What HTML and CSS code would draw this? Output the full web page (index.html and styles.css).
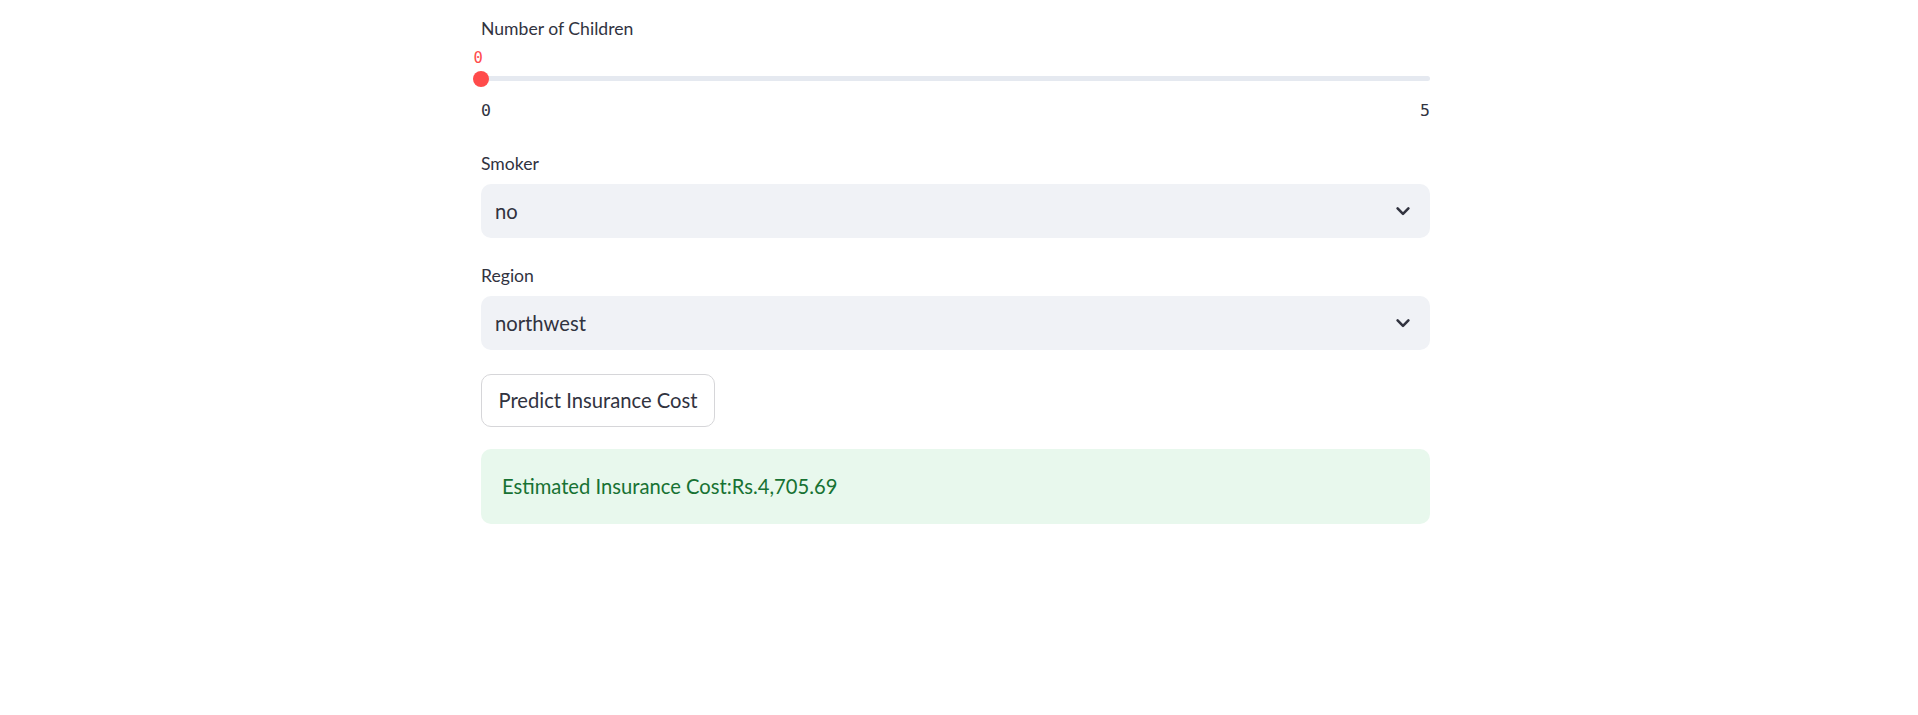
FILE: index.html
```html
<!DOCTYPE html>
<html lang="en">
<head>
<meta charset="utf-8">
<title>Insurance Cost Predictor</title>
<link rel="stylesheet" href="styles.css">
</head>
<body>
<main class="page">
  <div class="block">
    <div class="widget slider-widget">
      <div class="field-label">Number of Children</div>
      <div class="slider">
        <div class="track-row">
          <div class="track">
            <div class="thumb"><span class="thumb-value">0</span></div>
          </div>
        </div>
        <div class="ticks"><span>0</span><span>5</span></div>
      </div>
    </div>

    <div class="widget select-widget">
      <div class="field-label">Smoker</div>
      <div class="select">
        <span class="select-value">no</span>
        <svg class="chevron" width="24" height="24" viewBox="0 0 24 24" aria-hidden="true">
          <path d="M6.6 9.4 L12 14.8 L17.4 9.4" fill="none" stroke="currentColor" stroke-width="2.6" stroke-linecap="round" stroke-linejoin="round"/>
        </svg>
      </div>
    </div>

    <div class="widget select-widget">
      <div class="field-label">Region</div>
      <div class="select">
        <span class="select-value">northwest</span>
        <svg class="chevron" width="24" height="24" viewBox="0 0 24 24" aria-hidden="true">
          <path d="M6.6 9.4 L12 14.8 L17.4 9.4" fill="none" stroke="currentColor" stroke-width="2.6" stroke-linecap="round" stroke-linejoin="round"/>
        </svg>
      </div>
    </div>

    <div class="widget">
      <button class="btn" type="button">Predict Insurance Cost</button>
    </div>

    <div class="alert">Estimated Insurance Cost:Rs.4,705.69</div>
  </div>
</main>
</body>
</html>
```
FILE: styles.css
```css
html, body {
  margin: 0;
  padding: 0;
  background: #ffffff;
}

body {
  font-family: "Lato", "Noto Sans", sans-serif;
  color: #31333f;
}

.page {
  display: flex;
  justify-content: center;
  padding: 14.5px 7px 0 0;
}

.block {
  width: 949px;
  display: flex;
  flex-direction: column;
  gap: 22px;
}

.field-label {
  font-size: 17.6px;
  line-height: 28px;
  color: #31333f;
}

/* Slider */
.slider-widget {
  padding-bottom: 7.5px;
}

.slider {
  padding-top: 25px;
}

.track-row {
  height: 22px;
  display: flex;
  align-items: center;
}

.track {
  position: relative;
  width: 100%;
  height: 5px;
  border-radius: 3px;
  background: #e5e9f0;
}

.thumb {
  position: absolute;
  left: -8px;
  top: 50%;
  width: 16px;
  height: 16px;
  margin-top: -8px;
  border-radius: 50%;
  background: #ff4b4b;
}

.thumb-value {
  position: absolute;
  bottom: calc(100% + 5px);
  left: 0.5px;
  font-family: "DejaVu Sans Mono", monospace;
  font-size: 15.5px;
  line-height: 16px;
  color: #ff4b4b;
}

.ticks {
  margin-top: 11px;
  display: flex;
  justify-content: space-between;
  font-family: "DejaVu Sans Mono", monospace;
  font-size: 16.5px;
  line-height: 20px;
  color: #31333f;
}

/* Select */
.select-widget {
  padding-bottom: 2px;
}

.select {
  margin-top: 6px;
  height: 54px;
  box-sizing: border-box;
  display: flex;
  align-items: center;
  justify-content: space-between;
  padding: 0 15px 0 14px;
  background: #f0f2f6;
  border-radius: 10px;
}

.select-value {
  font-size: 20.2px;
  line-height: 54px;
  color: #31333f;
}

.chevron {
  display: block;
  color: #31333f;
}

/* Button */
.btn {
  display: block;
  height: 53px;
  box-sizing: border-box;
  padding: 0 16.5px;
  border: 1px solid #d6d6d9;
  border-radius: 10px;
  background: #ffffff;
  font-family: "Lato", "Noto Sans", sans-serif;
  font-size: 20.2px;
  line-height: 51px;
  color: #31333f;
  cursor: pointer;
}

/* Alert */
.alert {
  box-sizing: border-box;
  height: 75px;
  padding: 21px 21px;
  border-radius: 10px;
  background: #e8f8ed;
  color: #177233;
  font-size: 20.2px;
  line-height: 33px;
}
```
